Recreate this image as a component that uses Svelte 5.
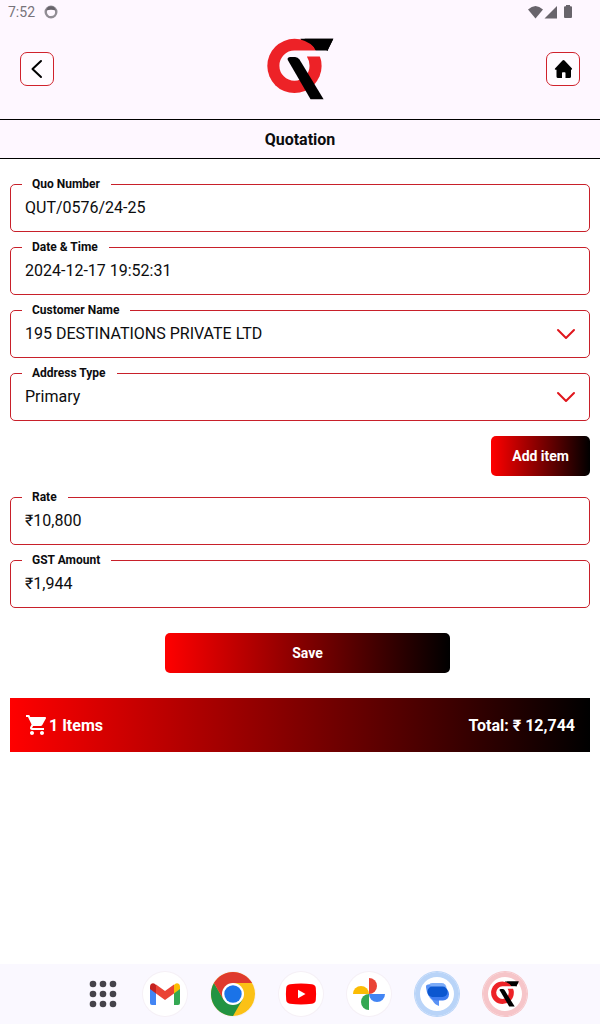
<script>
  let quoNumber = $state('QUT/0576/24-25');
  let dateTime = $state('2024-12-17 19:52:31');
  let customer = $state('195 DESTINATIONS PRIVATE LTD');
  let addressType = $state('Primary');
  let rate = $state('₹10,800');
  let gst = $state('₹1,944');
</script>

{#snippet logo(hole)}
  <svg class="logo" viewBox="50 40 200 184" aria-hidden="true">
    <path fill="#000" d="M150 42H248L230 78H160Z" />
    <circle cx="132" cy="123" r="81" fill="#ed2227" />
    <path fill="#000" d="M162 42H248L230 78H196Q185 54 162 42Z" />
    <path fill={hole} d="M132 77H229L220 95H169Q177 108 177 122A45 45 0 1 1 132 77Z" />
    <path fill="#000" d="M112 105Q109 97 120 96H134Q142 96 147 104L219 222H180Z" />
  </svg>
{/snippet}

{#snippet chevron()}
  <svg class="chevron" viewBox="0 0 20 12" aria-hidden="true">
    <path d="M2 2L10 10L18 2" fill="none" stroke="#e0161c" stroke-width="2" stroke-linecap="round" stroke-linejoin="round" />
  </svg>
{/snippet}

<div class="screen">
  <div class="top">
    <div class="status">
      <span>7:52</span>
      <svg class="ring" viewBox="0 0 14 14" aria-hidden="true">
        <circle cx="7" cy="7" r="5.300" fill="none" stroke="#918d94" stroke-width="2.400" />
        <path d="M2.200 5.600Q3 1.200 7 1.200T11.800 5.600Q7 3.800 2.200 5.600Z" fill="#68646b" />
      </svg>
      <svg class="signals" viewBox="0 0 46 16" aria-hidden="true">
        <g fill="#68646b">
          <path d="M0 5.500Q7.500-1.500 15 5.500L7.500 14.500Z" />
          <path d="M29 2V14.500H16.500Z" />
          <path d="M38 1H42V2.200H43Q44 2.200 44 3.200V13Q44 14 43 14H37Q36 14 36 13V3.200Q36 2.200 37 2.200H38Z" />
        </g>
      </svg>
    </div>

    <header>
      <button class="square" aria-label="Back">
        <svg viewBox="0 0 24 24" aria-hidden="true">
          <path d="M16 4L7.500 12L16 20" fill="none" stroke="#000" stroke-width="2" stroke-linecap="round" stroke-linejoin="round" />
        </svg>
      </button>
      <div class="brand">{@render logo('#fef7ff')}</div>
      <button class="square" aria-label="Home">
        <svg viewBox="0 0 24 24" aria-hidden="true">
          <path d="M11.500 3.500Q12.500 2.500 13.500 3.500L21 11.500Q21.500 12.600 20.300 12.800H20V19.500Q20 21 18.500 21H14.500V16Q14.500 15.200 13.700 15.200H11.800Q11 15.200 11 16V21H7Q5.500 21 5.500 19.500V12.800H4.500Q3.300 12.600 4 11.500Z" fill="#000" />
        </svg>
      </button>
    </header>

    <h1>Quotation</h1>
  </div>

  <main>
    <fieldset>
      <legend><label for="quo">Quo Number</label></legend>
      <input id="quo" type="text" bind:value={quoNumber} />
    </fieldset>
    <fieldset>
      <legend><label for="date">Date &amp; Time</label></legend>
      <input id="date" type="text" bind:value={dateTime} />
    </fieldset>
    <fieldset>
      <legend><label for="customer">Customer Name</label></legend>
      <div class="pick">
        <select id="customer" bind:value={customer}>
          <option>195 DESTINATIONS PRIVATE LTD</option>
        </select>
        {@render chevron()}
      </div>
    </fieldset>
    <fieldset>
      <legend><label for="address">Address Type</label></legend>
      <div class="pick">
        <select id="address" bind:value={addressType}>
          <option>Primary</option>
        </select>
        {@render chevron()}
      </div>
    </fieldset>

    <button class="action add">Add item</button>

    <fieldset>
      <legend><label for="rate">Rate</label></legend>
      <input id="rate" type="text" bind:value={rate} />
    </fieldset>
    <fieldset>
      <legend><label for="gst">GST Amount</label></legend>
      <input id="gst" type="text" bind:value={gst} />
    </fieldset>

    <button class="action save">Save</button>

    <div class="summary">
      <svg viewBox="0 0 24 24" aria-hidden="true">
        <path fill="#fff" d="M7 18c-1.100 0-1.990.9-1.990 2S5.900 22 7 22s2-.9 2-2-.9-2-2-2zM1 2v2h2l3.600 7.590-1.350 2.450c-.16.280-.25.610-.25.960 0 1.100.9 2 2 2h12v-2H7.420c-.14 0-.25-.11-.25-.25l.03-.12.900-1.630h7.450c.75 0 1.410-.41 1.750-1.030l3.580-6.490c.08-.14.120-.31.120-.48 0-.55-.45-1-1-1H5.210l-.94-2H1zm16 16c-1.100 0-1.990.9-1.990 2s.89 2 1.990 2 2-.9 2-2-.9-2-2-2z" />
      </svg>
      <span>1 Items</span>
      <span class="total">Total: ₹ 12,744</span>
    </div>
  </main>

  <nav>
    <button class="apps" aria-label="All apps">
      <svg viewBox="0 0 28 28" aria-hidden="true">
        {#each [4, 14, 24] as y}
          {#each [4, 14, 24] as x}
            <circle cx={x} cy={y} r="3.300" fill="#45434a" />
          {/each}
        {/each}
      </svg>
    </button>
    <button class="app" aria-label="Gmail">
      <svg viewBox="0 0 44 44" aria-hidden="true">
        <path fill="#4285f4" d="M7 15L13 19.500V33H9Q7 33 7 31Z" />
        <path fill="#34a853" d="M31 19.500L37 15V31Q37 33 35 33H31Z" />
        <path fill="#fbbc04" d="M31 13L32 12Q34 10.600 36 12Q37 13 37 15V17L31 21.500Z" />
        <path fill="#c5221f" d="M7 17V15Q7 13 8 12Q10 10.600 12 12L13 13V21.500Z" />
        <path fill="#ea4335" d="M13 12.500L22 19L31 12.500V21.500L22 28L13 21.500Z" />
      </svg>
    </button>
    <button class="app" aria-label="Chrome">
      <svg viewBox="0 0 44 44" aria-hidden="true">
        <circle cx="22" cy="22" r="22" fill="#fbc116" />
        <path fill="#229342" d="M22 22L31.500 27.500L22 44A22 22 0 0 1 2.950 11L12.500 27.500Z" />
        <path fill="#df3a2e" d="M22 22L12.500 27.500L2.950 11A22 22 0 0 1 41.050 11H22Z" />
        <circle cx="22" cy="22" r="11" fill="#fff" />
        <circle cx="22" cy="22" r="8.700" fill="#1a73e8" />
      </svg>
    </button>
    <button class="app" aria-label="YouTube">
      <svg viewBox="0 0 44 44" aria-hidden="true">
        <path fill="#f00" d="M11 12.300Q22 10.800 33 12.300Q36.500 12.800 36.800 16Q37.400 22 36.800 28Q36.500 31.300 33 31.800Q22 33.200 11 31.800Q7.500 31.300 7.200 28Q6.600 22 7.200 16Q7.500 12.800 11 12.300Z" />
        <path fill="#fff" d="M19 17.800L26.500 22L19 26.200Z" />
      </svg>
    </button>
    <button class="app" aria-label="Photos">
      <svg viewBox="0 0 44 44" aria-hidden="true">
        <path fill="#ea4335" d="M22 6A8 8 0 0 1 22 22Z" />
        <path fill="#4285f4" d="M22 22H38A8 8 0 0 1 22 22Z" />
        <path fill="#34a853" d="M22 22V38A8 8 0 0 1 22 22Z" />
        <path fill="#fbbc04" d="M22 22H6A8 8 0 0 1 22 22Z" />
      </svg>
    </button>
    <button class="app messages" aria-label="Messages">
      <svg viewBox="0 0 44 44" aria-hidden="true">
        <rect x="12.500" y="11" width="19" height="12" rx="5" fill="#7cacf8" />
        <path fill="#5b93f5" d="M11 15.500Q10.500 12 14 12.500L24 20V28H24V34Q19.500 32.500 17.500 28.500Q12 24 11 15.500Z" />
        <rect x="15" y="16" width="19" height="12.500" rx="6" fill="#3f7df0" />
        <rect x="12.500" y="14.500" width="20" height="10.500" rx="5" fill="#0b57d0" />
      </svg>
    </button>
    <button class="app current" aria-label="Quotations">
      {@render logo('#fff')}
    </button>
  </nav>
</div>

<style>
  :global(body) {
    margin: 0;
    background: #fff;
  }

  .screen {
    display: flex;
    flex-direction: column;
    min-height: 100vh;
    color: #0c0c0e;
    font-family: Roboto, sans-serif;
  }

  button,
  input,
  select {
    margin: 0;
    padding: 0;
    border: 0;
    background: none;
    color: inherit;
    font: inherit;
  }

  svg {
    display: block;
  }

  .top {
    background: #fef7ff;
  }

  .status {
    display: flex;
    align-items: center;
    gap: 9px;
    height: 24px;
    padding: 0 26px 0 8px;
    color: #77737a;
    font-size: 14px;
  }

  .ring {
    width: 14px;
    height: 14px;
  }

  .signals {
    width: 46px;
    height: 16px;
    margin-left: auto;
  }

  header {
    display: flex;
    align-items: center;
    justify-content: space-between;
    padding: 14px 20px 19px;
  }

  .square {
    display: grid;
    place-items: center;
    box-sizing: border-box;
    width: 34px;
    height: 34px;
    border: 1px solid #d0222c;
    border-radius: 7px;
    background: #fffbff;
  }

  .square svg {
    width: 24px;
    height: 24px;
  }

  .brand .logo {
    width: 67px;
    height: 62px;
  }

  h1 {
    margin: 0;
    padding-top: 2px;
    border: solid #000;
    border-width: 1px 0;
    font-size: 16px;
    font-weight: 700;
    line-height: 36px;
    text-align: center;
  }

  main {
    display: flex;
    flex: 1;
    flex-direction: column;
    gap: 7px;
    padding: 17px 10px;
  }

  fieldset {
    min-width: 0;
    margin: 0;
    padding: 0;
    border: 1px solid #c8202a;
    border-radius: 5px;
  }

  legend {
    margin-left: 11px;
    padding: 0 11px 0 10px;
    font-size: 12px;
    font-weight: 700;
    line-height: 17px;
  }

  input,
  select {
    display: block;
    box-sizing: border-box;
    width: 100%;
    height: 38px;
    padding: 2px 14px 12px;
    border-radius: 5px;
    appearance: none;
    font-size: 16px;
    line-height: 24px;
  }

  select {
    padding: 3px 14px 11px;
  }

  .pick {
    display: grid;
  }

  .pick > :global(*) {
    grid-area: 1 / 1;
  }

  .chevron {
    justify-self: end;
    width: 20px;
    height: 12px;
    margin: 9px 13px 0 0;
    pointer-events: none;
  }

  .action {
    height: 40px;
    border-radius: 5px;
    background: linear-gradient(90deg, #f00, #000);
    color: #fff;
    font-size: 14px;
    font-weight: 700;
  }

  .add {
    align-self: flex-end;
    margin: 8px 0 6px;
    padding: 0 21px;
  }

  .save {
    align-self: center;
    width: 49%;
    margin: 18px 0 18px 15px;
  }

  .summary {
    display: flex;
    align-items: center;
    height: 54px;
    padding: 0 15px;
    background: linear-gradient(90deg, #f00, #000);
    color: #fff;
    font-size: 16px;
    font-weight: 700;
  }

  .summary svg {
    width: 24px;
    height: 24px;
  }

  .total {
    margin-left: auto;
  }

  nav {
    display: flex;
    align-items: center;
    justify-content: center;
    gap: 24px;
    height: 60px;
    padding-left: 16px;
    background: #faf8ff;
  }

  .apps {
    padding-right: 2px;
  }

  .apps svg {
    width: 28px;
    height: 28px;
  }

  .app {
    display: grid;
    place-items: center;
    width: 44px;
    height: 44px;
    border-radius: 50%;
    background: #fff;
    box-shadow: 0 0 0 1px #f5f0f6;
  }

  .app svg {
    width: 44px;
    height: 44px;
  }

  .messages {
    box-shadow: inset 0 0 0 5px #b9d4f8, 0 0 0 1px #b9d4f8;
  }

  .current {
    box-shadow: inset 0 0 0 5px #f6c5c9, 0 0 0 1px #f6c5c9;
  }

  .app.current .logo {
    width: 28px;
    height: 26px;
  }
</style>
